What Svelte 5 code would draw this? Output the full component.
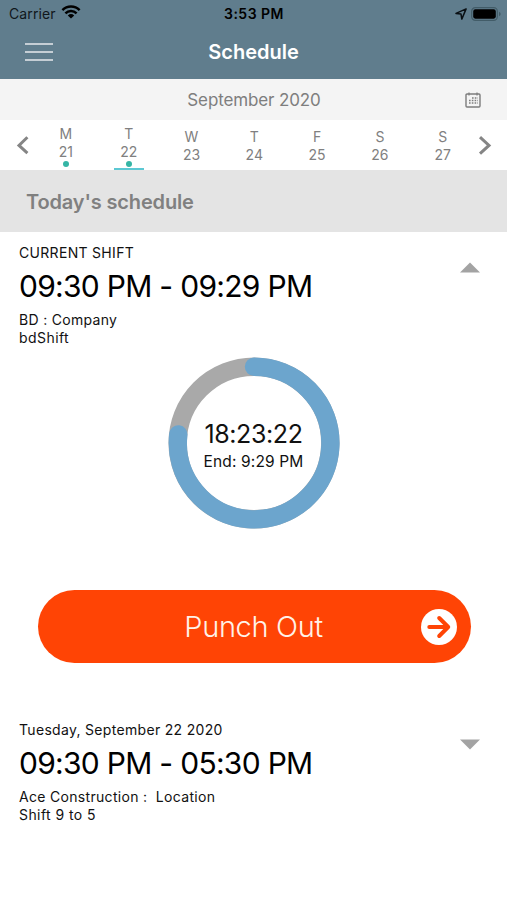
<script>
  const days = [
    { letter: 'M', date: 21, dot: true },
    { letter: 'T', date: 22, dot: true, selected: true },
    { letter: 'W', date: 23 },
    { letter: 'T', date: 24 },
    { letter: 'F', date: 25 },
    { letter: 'S', date: 26 },
    { letter: 'S', date: 27 }
  ];
</script>

<div class="screen">
  <header>
    <div class="status">
      <div class="carrier">
        <span>Carrier</span>
        <svg width="20" height="16" viewBox="0 0 20 16" fill="none" stroke="#000" stroke-width="2.5">
          <path d="M1.4 6.1a12.3 12.3 0 0 1 17.2 0" />
          <path d="M4.4 9.3a8 8 0 0 1 11.2 0" />
          <path d="M10 14.6L6.8 11.5a4.7 4.7 0 0 1 6.4 0z" fill="#000" stroke="none" />
        </svg>
      </div>
      <div class="clock">3:53 PM</div>
      <div class="indicators">
        <svg width="12" height="12" viewBox="0 0 12 12" fill="none" stroke="#0a1014" stroke-width="1.5" stroke-linejoin="round">
          <path d="M11.1 .9L1 5.4L6 6.1L6.8 11.1z" />
        </svg>
        <svg width="31" height="14" viewBox="0 0 31 14">
          <rect x="0.7" y="0.7" width="25.6" height="12.6" rx="3.6" fill="none" stroke="#425c68" stroke-width="1.2" />
          <rect x="2.2" y="2.3" width="22.6" height="9.4" rx="2.1" fill="#000" />
          <path d="M28 4.8v4.4q1.7-.7 1.7-2.2T28 4.8z" fill="#425c68" />
        </svg>
      </div>
    </div>
    <div class="nav">
      <div class="menu"><i></i><i></i><i></i></div>
      <h1>Schedule</h1>
    </div>
  </header>

  <div class="month">
    <span>September 2020</span>
    <svg width="16" height="16" viewBox="0 0 16 16" fill="none" stroke="#7c7c7c">
      <rect x="1" y="2" width="14" height="13" rx="1" stroke-width="1.4" />
      <path d="M4 .5v3M12 .5v3" stroke-width="1.2" />
      <path d="M7 6h6M4 8.5h9M4 11h9" stroke-width="1.4" stroke-dasharray="1.6 1.2" />
    </svg>
  </div>

  <div class="week">
    <svg class="arrow" width="46" height="50" viewBox="0 0 46 50"><path d="M27.4 17.2L19 25.4L27.4 33.2" /></svg>
    {#each days as day}
      <div class="day" class:marked={day.dot}>
        <span>{day.letter}</span>
        <span>{day.date}</span>
        {#if day.dot}<b></b>{/if}
        {#if day.selected}<u></u>{/if}
      </div>
    {/each}
    <svg class="arrow next" width="46" height="50" viewBox="0 0 46 50"><path d="M21 17.2L30 25.4L21 33.6" /></svg>
  </div>

  <h2>Today's schedule</h2>

  <section class="shift">
    <div>
      <p class="caption">CURRENT SHIFT</p>
      <p class="time">09:30 PM - 09:29 PM</p>
      <p class="company">BD : Company</p>
      <p class="name">bdShift</p>
    </div>
    <svg class="toggle" width="20" height="11" viewBox="0 0 20 11"><path d="M0 10.5L10 .5L20 10.5z" /></svg>
  </section>

  <div class="timer">
    <svg width="172" height="172" viewBox="0 0 172 172" fill="none" stroke-width="18.4">
      <circle cx="86" cy="86" r="76.3" stroke="#a9a9a9" />
      <path d="M86 9.7A76.3 76.3 0 1 1 10.3 77.5" stroke="#6ca5cd" stroke-linecap="round" />
    </svg>
    <div class="readout">
      <span class="remaining">18:23:22</span>
      <span class="end">End: 9:29 PM</span>
    </div>
  </div>

  <button>
    <span>Punch Out</span>
    <svg width="36" height="36" viewBox="0 0 36 36">
      <circle cx="18" cy="18" r="18" fill="#fff" />
      <path d="M8.3 18H27M18.2 9L27.2 18L18.2 27" fill="none" stroke="#ff4405" stroke-width="4" stroke-linecap="round" stroke-linejoin="round" />
    </svg>
  </button>

  <section class="shift">
    <div>
      <p class="caption">Tuesday, September 22 2020</p>
      <p class="time">09:30 PM - 05:30 PM</p>
      <p class="company">Ace Construction :&nbsp; Location</p>
      <p class="name">Shift 9 to 5</p>
    </div>
    <svg class="toggle" width="20" height="11" viewBox="0 0 20 11"><path d="M0 .5L10 10.5L20 .5z" /></svg>
  </section>
</div>

<style>
  :global(body) { background: #fff; }
  .screen {
    width: 507px;
    height: 900px;
    overflow: hidden;
    background: #fff;
    color: #111;
    font-family: Inter, "Liberation Sans", sans-serif;
    display: flex;
    flex-direction: column;
  }
  .screen > * { flex-shrink: 0; box-sizing: border-box; }
  h1, h2, p { margin: 0; }
  svg { display: block; flex: none; }
  span, p, h1, h2 { white-space: pre; }

  header { height: 79px; background: #607d8d; }
  .status {
    height: 28px;
    display: grid;
    grid-template-columns: 1fr auto 1fr;
    align-items: center;
    padding: 0 6px 0 9px;
    color: #10171b;
    font-size: 14px;
    line-height: 28px;
  }
  .carrier { display: flex; align-items: center; gap: 5px; letter-spacing: 0.12px; }
  .carrier svg { margin-top: -4px; }
  .clock { color: #000; font-weight: 600; letter-spacing: 0.5px; margin-right: 2px; }
  .indicators { display: flex; align-items: center; justify-content: flex-end; gap: 4px; margin: -1px -1px 0 0; }
  .nav {
    height: 51px;
    display: grid;
    grid-template-columns: 1fr auto 1fr;
    align-items: start;
  }
  .menu { padding: 15px 0 0 25px; display: flex; flex-direction: column; gap: 6px; }
  .menu i { width: 28px; height: 2px; background: #c5ced5; }
  h1 { color: #fff; font-size: 20px; font-weight: 600; line-height: 48px; }

  .month {
    height: 41px;
    background: #f4f4f4;
    color: #7e7e7e;
    display: grid;
    grid-template-columns: 1fr auto 1fr;
    align-items: center;
    font-size: 17px;
    letter-spacing: -0.13px;
  }
  .month span { grid-column: 2; padding-left: 1px; }
  .month svg { justify-self: end; margin-right: 26px; }

  .week { height: 50px; display: flex; }
  .arrow { fill: none; stroke: #858585; stroke-width: 3; margin-right: -12px; }
  .next { margin: 0 0 0 -15px; }
  .day {
    width: 62.8px;
    display: flex;
    flex-direction: column;
    align-items: center;
    color: #808080;
    font-size: 14px;
    line-height: 18px;
    padding: 8px 0 0 1px;
    box-sizing: border-box;
    flex: none;
  }
  .day.marked { padding-top: 5px; }
  .day > * { flex: none; }
  .day b { width: 6px; height: 6px; border-radius: 50%; background: #35b5a5; }
  .day u { width: 30px; height: 2px; background: #5cc8d3; margin-top: 1px; }

  h2 {
    height: 62px;
    background: #e4e4e4;
    color: #808080;
    font-size: 20px;
    font-weight: 600;
    line-height: 64px;
    letter-spacing: -0.15px;
    padding-left: 26px;
  }

  .shift {
    display: flex;
    justify-content: space-between;
    padding: 12px 27px 0 19px;
    height: 126px;
  }
  .caption, .company, .name { font-size: 14px; line-height: 18px; letter-spacing: 0.31px; }
  .name { letter-spacing: 0.43px; }
  .time { color: #000; font-size: 30px; line-height: 36px; letter-spacing: -0.71px; margin: 6px 0 7px; }
  .toggle { fill: #a3a3a3; margin-top: 18px; }

  .timer { height: 172px; align-self: center; display: grid; margin-top: -1px; }
  .timer svg, .readout { grid-area: 1 / 1; }
  .readout { display: flex; flex-direction: column; align-items: center; padding-top: 62px; }
  .remaining { font-size: 25px; line-height: 30px; letter-spacing: -0.4px; }
  .end { font-size: 15.5px; line-height: 26px; letter-spacing: 0.15px; }

  button {
    width: 433px;
    height: 73px;
    margin: 61px 0 46px 37.5px;
    padding: 0 14px 0 0;
    border: 0;
    border-radius: 37px;
    background: #ff4405;
    color: #fff2e8;
    font-family: inherit;
    font-size: 29px;
    font-weight: 300;
    letter-spacing: -0.35px;
    display: grid;
    grid-template-columns: 1fr auto 1fr;
    align-items: center;
  }
  button span { grid-column: 2; padding-left: 13px; }
  button svg { justify-self: end; }
</style>
